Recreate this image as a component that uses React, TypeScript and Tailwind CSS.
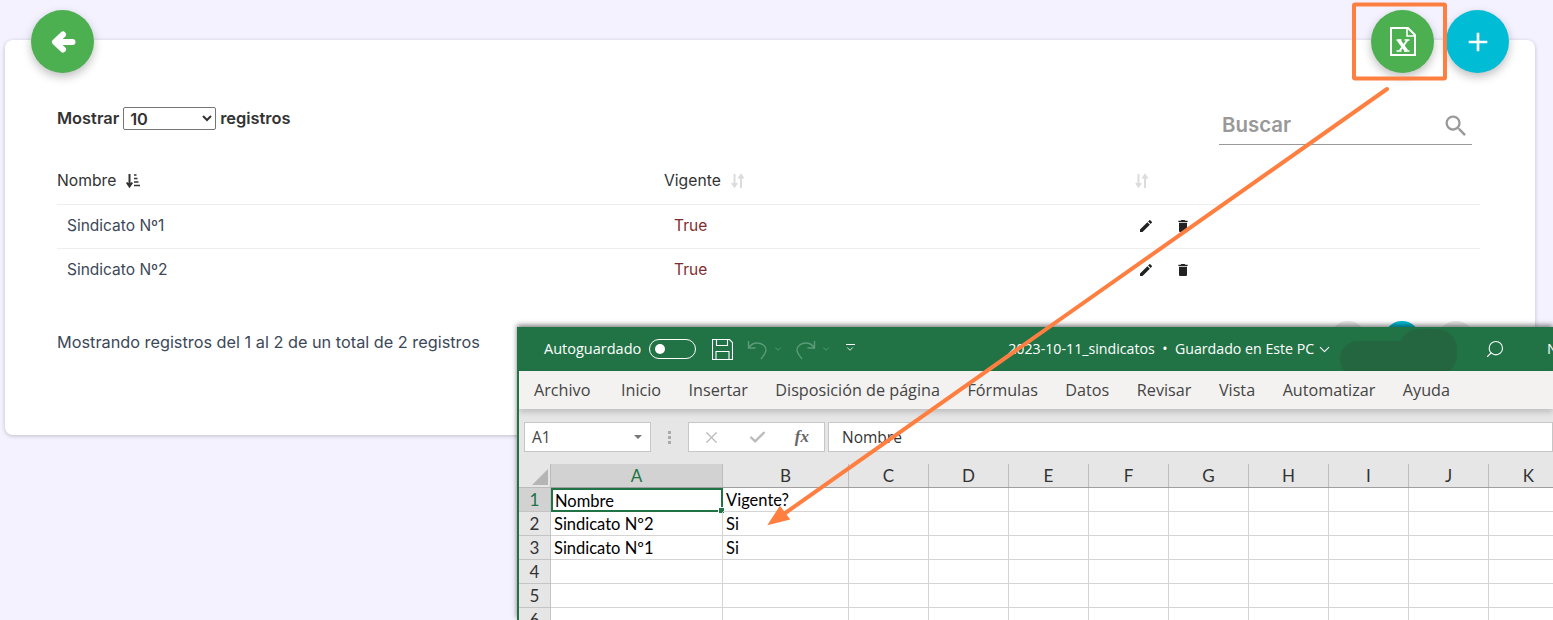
import { MdAdd, MdDelete, MdEdit, MdSearch } from "react-icons/md";
import { ChevronDown, Search, X, Check } from "lucide-react";

const columnas = ["A", "B", "C", "D", "E", "F", "G", "H", "I", "J", "K"];
const anchos = "grid shrink-0 grid-cols-[172px_126px_80px_80px_80px_80px_80px_80px_80px_80px_80px]";
const pestanas = ["Archivo", "Inicio", "Insertar", "Disposición de página", "Fórmulas", "Datos", "Revisar", "Vista", "Automatizar", "Ayuda"];
const filas = [
  ["Nombre", "Vigente?"],
  ["Sindicato Nº2", "Si"],
  ["Sindicato Nº1", "Si"],
  ["", ""],
  ["", ""],
  ["", ""],
];

const Volver = () => (
  <svg width="26" height="26" viewBox="0 0 26 26" fill="none" stroke="white" strokeWidth="6" strokeLinecap="round" strokeLinejoin="round">
    <path d="M22.500 13H6M13 5.500 5 13l8 7.500" />
  </svg>
);

const SortDown = () => (
  <svg width="16" height="16" viewBox="0 0 16 16" className="text-[#333]">
    <path d="M4.500 1v11.500M1.800 9.500l2.700 4 2.700-4" fill="none" stroke="currentColor" strokeWidth="2" />
    <path d="M9 2h2.500M9 5.500h3.500M9 9h4.500M9 12.500h6" stroke="currentColor" strokeWidth="1.600" />
  </svg>
);

const SortBoth = () => (
  <svg width="16" height="16" viewBox="0 0 16 16" className="text-[#dcdcdc]">
    <path d="M4.500 1v12M2 10l2.500 3.500L7 10M11 15V3M8.500 5.500 11 2l2.500 3.500" fill="none" stroke="currentColor" strokeWidth="2" />
  </svg>
);

const ExcelFile = () => (
  <svg width="26" height="29" viewBox="0 0 26 29" fill="none" stroke="white">
    <path d="M1 1h17l7 7v20H1z" strokeWidth="2" />
    <path d="M17 1v8h8" strokeWidth="1.600" />
    <path d="M8.500 13 16.500 24" strokeWidth="3.600" />
    <path d="M17.500 13 9.500 24" strokeWidth="2" />
    <path d="M6.500 13h5M14.500 13h5M6.500 24h5M14 24h5.500" strokeWidth="1.700" />
  </svg>
);

const Guardar = () => (
  <svg width="21" height="21" viewBox="0 0 21 21" fill="none" stroke="white" strokeWidth="1.100">
    <path d="M.5.500h17l3 3v17H.5z" />
    <path d="M4.500.500v6h11v-6M4 20.500v-8h13v8" />
  </svg>
);

const Deshacer = ({ flip = false }: { flip?: boolean }) => (
  <svg width="21" height="21" viewBox="0 0 21 21" fill="none" stroke="#5c9c7a" strokeWidth="1.400" className={flip ? "-scale-x-100" : ""}>
    <path d="M1.500 2v7h7M1.500 9C4 5 7 4 10 4c5 0 9 3 9 7 0 3-2 5-5 9" />
  </svg>
);

const BarraExcel = () => (
  <div className="relative flex h-[44px] items-center bg-[#217346] pl-[25px] text-[14.5px] text-white">
    <span>Autoguardado</span>
    <span className="ml-[8px] flex h-[20px] w-[47px] items-center rounded-full border border-white pl-[5px]">
      <span className="h-[10px] w-[10px] rounded-full bg-white" />
    </span>
    <span className="ml-[16px]"><Guardar /></span>
    <span className="ml-[14px]"><Deshacer /></span>
    <ChevronDown size={10} className="ml-[5px] text-[#5c9c7a]" />
    <span className="ml-[12px]"><Deshacer flip /></span>
    <ChevronDown size={10} className="ml-[5px] text-[#5c9c7a]" />
    <span className="ml-[14px] flex flex-col items-center">
      <span className="h-px w-[9px] bg-white" />
      <ChevronDown size={10} className="-mt-[1px]" />
    </span>
    <span className="ml-[153px] whitespace-nowrap text-[14.200px]">2023-10-11_sindicatos&nbsp; •&nbsp; Guardado en Este PC</span>
    <ChevronDown size={17} strokeWidth={1.500} className="ml-[2px]" />
    <span className="absolute left-[821px] top-[14px] h-[36px] w-[84px] rounded-full bg-[#236640]" />
    <span className="absolute left-[880px] top-[2px] h-[46px] w-[58px] rounded-[20px] bg-[#236640]" />
    <Search size={20} className="absolute left-[966px] top-[12px] -scale-x-100" strokeWidth={1.300} />
    <span className="absolute left-[1028px] top-[11px]">N</span>
  </div>
);

const BarraFormula = () => (
  <div className="flex h-[51px] items-center gap-[3px] bg-[#e6e6e6] pl-[5px] pt-[5px] text-[15.500px] text-[#444]">
    <div className="flex h-[30px] w-[127px] items-center justify-between border border-[#c6c6c6] bg-white pl-[7px] pr-[8px]">
      <span className="pt-[1px]">A1</span>
      <span className="h-0 w-0 border-x-[4px] border-t-[4px] border-x-transparent border-t-[#777]" />
    </div>
    <div className="mx-[14px] flex flex-col gap-[2px]">
      <span className="h-[3px] w-[3px] bg-[#aaa]" />
      <span className="h-[3px] w-[3px] bg-[#aaa]" />
      <span className="h-[3px] w-[3px] bg-[#aaa]" />
    </div>
    <div className="flex h-[30px] w-[137px] items-center justify-between border border-[#c6c6c6] bg-white pl-[13px] pr-[15px] text-[#bbb]">
      <X size={19} strokeWidth={1.500} />
      <Check size={19} strokeWidth={3} />
      <span className="font-['Liberation_Serif',serif] text-[17px] font-bold italic text-[#666]">fx</span>
    </div>
    <div className="flex h-[30px] flex-1 items-center border border-[#c6c6c6] bg-white pl-[13px] pt-[1px] text-[#333]">Nombre</div>
  </div>
);

const Hoja = () => (
  <div className="bg-[#e6e6e6] pt-[4px] font-['Lato',sans-serif] text-[16.500px] leading-none text-black">
    <div className="flex h-[24px]">
      <div className="flex w-[32px] shrink-0 items-end justify-end border-r border-b border-[#bbb] pb-[2px] pr-[2px]">
        <span className="h-0 w-0 border-b-[16px] border-l-[16px] border-b-[#b5b5b5] border-l-transparent" />
      </div>
      <div className={`${anchos} border-b border-[#9f9f9f] text-[17px]`}>
        {columnas.map((c, i) => (
          <div key={c} className={`flex items-center justify-center border-r border-[#bdbdbd] ${i === 0 ? "bg-[#d2d2d2] text-[#217346]" : "text-[#333]"}`}>{c}</div>
        ))}
      </div>
    </div>
    {filas.map((fila, r) => (
      <div key={r} className="flex h-[24px]">
        <div className={`flex w-[32px] shrink-0 items-center justify-center border-r border-b border-[#c4c4c4] text-[17px] ${r === 0 ? "bg-[#d2d2d2] text-[#217346]" : "text-[#333]"}`}>{r + 1}</div>
        <div className={`${anchos} bg-white`}>
          {columnas.map((c, i) => {
            const activa = r === 0 && i === 0;
            return (
              <div key={c} className={`relative flex items-center pt-[2px] ${activa ? "border-2 border-[#217346] pl-[2px]" : "border-r border-b border-[#d4d4d4] pl-[3px]"}`}>
                {i < 2 ? fila[i] : ""}
                {activa && <span className="absolute -bottom-[4px] -right-[4px] h-[7px] w-[7px] border border-white bg-[#217346]" />}
              </div>
            );
          })}
        </div>
      </div>
    ))}
  </div>
);

const Excel = () => (
  <div className="absolute left-[517px] top-[327px] h-[293px] w-[1036px] overflow-hidden border-l-2 border-[#217346] font-['Open_Sans',sans-serif] shadow-[0_-2px_5px_rgba(0,0,0,0.5)]">
    <BarraExcel />
    <div className="relative z-10 flex h-[38px] items-center gap-[27.500px] bg-[#f3f2f1] pl-[15px] text-[16.200px] text-[#444] shadow-[0_3px_6px_rgba(0,0,0,0.18)]">
      {pestanas.map((p) => (
        <span key={p} className="whitespace-nowrap first:mr-[3px]">{p}</span>
      ))}
    </div>
    <BarraFormula />
    <Hoja />
  </div>
);

const Anotaciones = () => (
  <svg width="1553" height="620" viewBox="0 0 1553 620" fill="none" stroke="#ff7f41" className="pointer-events-none absolute left-0 top-0 z-20">
    <rect x="1354" y="4.500" width="91" height="74" rx="1" strokeWidth="4" />
    <path d="M1387 89 781 516" strokeWidth="4" strokeLinecap="round" />
    <path d="M769 524 780 507 789 519z" fill="#ff7f41" stroke="#ff7f41" strokeWidth="1.500" />
  </svg>
);

export default function App() {
  return (
    <div className="relative h-[620px] w-[1553px] overflow-hidden bg-[#f3f2fe] px-[5px] pt-[10px] font-['Inter',sans-serif] text-[#3c4858]">
      <div className="relative z-10 flex justify-between pl-[26px] pr-[39px]">
        <button className="flex h-[63px] w-[63px] items-center justify-center rounded-full bg-[#4caf50] shadow-[0_4px_10px_rgba(0,0,0,0.25)]">
          <Volver />
        </button>
        <div className="flex gap-[12px]">
          <button className="flex h-[63px] w-[63px] items-center justify-center rounded-full bg-[#4caf50] shadow-[0_4px_10px_rgba(0,0,0,0.25)]">
            <ExcelFile />
          </button>
          <button className="flex h-[63px] w-[63px] items-center justify-center rounded-full bg-[#00bcd4] text-white shadow-[0_4px_10px_rgba(0,0,0,0.25)]">
            <MdAdd size={32} />
          </button>
        </div>
      </div>
      <div className="-mt-[33px] h-[395px] w-[1530px] rounded-[8px] bg-white pl-[52px] pr-[55px] pt-[67px] shadow-[0_1px_4px_rgba(0,0,0,0.22)]">
        <div className="flex h-[53px] items-start justify-between">
          <label className="flex h-[23px] items-center gap-[4px] text-[16.400px] font-semibold text-[#333]">
            Mostrar
            <select className="h-[23px] w-[93px] rounded-[2px] border border-[#767676] bg-white px-[2px] text-[16.400px] font-semibold">
              <option>10</option>
            </select>
            registros
          </label>
          <div className="-mr-[-8px] flex h-[38px] w-[253px] items-center justify-between border-b border-[#999] pl-[3px] pr-[2px]">
            <input placeholder="Buscar" className="w-[150px] bg-transparent text-[20.400px] font-semibold placeholder:text-[#999]" />
            <MdSearch size={28} className="text-[#999]" />
          </div>
        </div>
        <div className="grid h-[45px] grid-cols-[607px_465px_1fr] items-center border-b border-[#eee] pb-[2px] text-[15.700px]">
          <span className="flex items-center gap-[9px] text-[#333]">Nombre <SortDown /></span>
          <span className="flex items-center gap-[9px] text-[#333]">Vigente <SortBoth /></span>
          <span className="pl-[5px]"><SortBoth /></span>
        </div>
        {["Sindicato Nº1", "Sindicato Nº2"].map((nombre, i) => (
          <div key={nombre} className={`grid h-[44px] grid-cols-[607px_465px_1fr] items-center text-[15.500px] ${i === 0 ? "border-b border-[#eee]" : ""} pb-[2px]`}>
            <span className="pl-[10px]">{nombre}</span>
            <span className="pl-[10px] text-[#7d2e2e]">True</span>
            <span className="flex items-center gap-[21px] pl-[9px] text-[#222]">
              <MdEdit size={16} />
              <MdDelete size={16} />
            </span>
          </div>
        ))}
        <div className="relative mt-[37px] text-[16.300px]">
          Mostrando registros del 1 al 2 de un total de 2 registros
          <div className="absolute left-[1273px] -top-[9px] flex gap-[18px]">
            <span className="h-[36px] w-[36px] rounded-full bg-[#e8e8e8]" />
            <span className="h-[36px] w-[36px] rounded-full bg-[#00bcd4]" />
            <span className="h-[36px] w-[36px] rounded-full bg-[#e8e8e8]" />
          </div>
        </div>
      </div>
      <Excel />
      <Anotaciones />
    </div>
  );
}
